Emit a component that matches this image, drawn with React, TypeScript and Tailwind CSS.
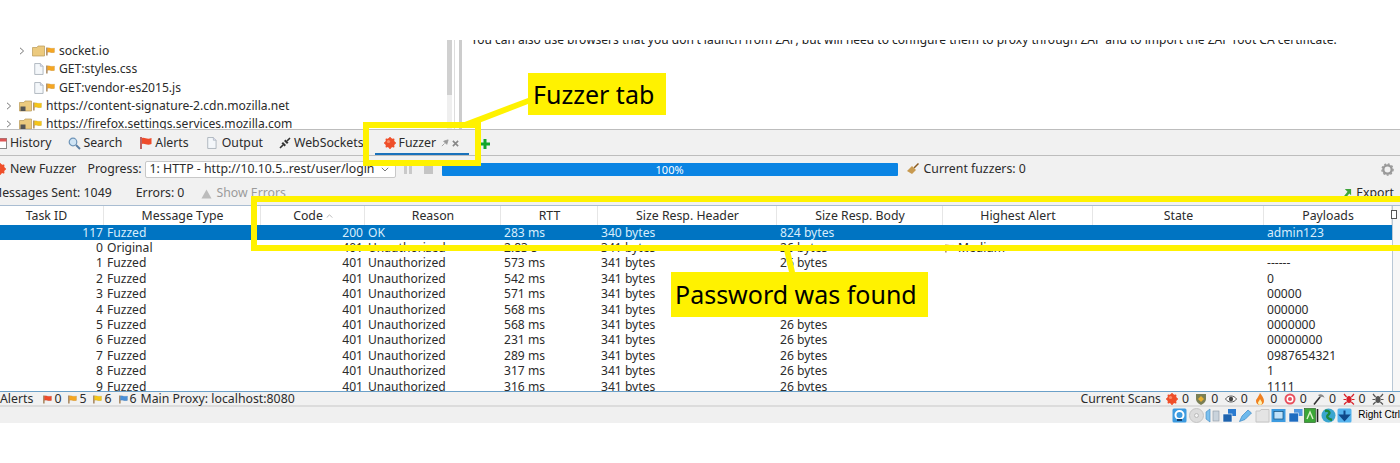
import React from "react";

const Flag = ({ c, className = "" }: { c: string; className?: string }) => (
  <svg viewBox="0 0 10 10" className={`w-[9px] h-[9px] shrink-0 ${className}`}>
    <path d="M1 0.5V9.5" stroke="#8a5a20" strokeWidth="1.2" />
    <path d="M1.5 1 C3.5 0 5 2.2 9.5 1 V6 C5.5 7 3.5 5 1.5 6Z" fill={c} stroke="#0003" strokeWidth=".4" />
  </svg>
);
const Folder = ({ lock }: { lock?: boolean }) => (
  <svg viewBox="0 0 13 12" className="w-[13px] h-[12px] shrink-0">
    <path d="M.5 2.5 H5 L6 1 H12.5 V11 H.5Z" fill="#ecca7e" stroke="#b99a58" strokeWidth=".7" />
    {lock && <rect x="1.5" y="6.5" width="5" height="4.5" fill="#555" />}
  </svg>
);
const FileIc = () => (
  <svg viewBox="0 0 11 13" className="w-[10px] h-[12px] shrink-0">
    <path d="M.8.5H7L10 3.5V12.5H.8Z" fill="#f4f7fa" stroke="#9aa4ae" strokeWidth=".8" />
    <path d="M7 .5V3.5H10" fill="#dde" stroke="#9aa4ae" strokeWidth=".6" />
  </svg>
);
const Chevron = () => (
  <svg viewBox="0 0 6 8" className="w-[6px] h-[8px] shrink-0">
    <path d="M1 .8 4.6 4 1 7.2" fill="none" stroke="#777" strokeWidth="1" />
  </svg>
);
const Burst = ({ size = 12 }: { size?: number }) => (
  <svg viewBox="0 0 12 12" style={{ width: size, height: size }} className="shrink-0">
    <circle cx="6" cy="6" r="5" fill="#ef4f2a" />
    <path d="M6 0V12M0 6H12M1.8 1.8 10.2 10.2M10.2 1.8 1.8 10.2" stroke="#ef4f2a" strokeWidth="1.5" />
    <circle cx="4.5" cy="4.5" r="1.6" fill="#f98a66" />
  </svg>
);
const Bug = ({ c }: { c: string }) => (
  <svg viewBox="0 0 12 12" className="w-[12px] h-[12px] shrink-0">
    <ellipse cx="6" cy="6.5" rx="2.6" ry="3.5" fill={c} />
    <path d="M1 1 3.6 4M11 1 8.4 4M.5 6.5H3M11.5 6.5H9M1 11.5 3.6 9M11 11.5 8.4 9" stroke={c} strokeWidth="1.2" />
  </svg>
);

const TopTree = () => {
  const Row = ({ pl, chev, folder, lock, file, flag, t }: any) => (
    <div className={`h-[18.3px] flex items-center ${pl}`}>
      <div className="w-[13px] shrink-0">{chev && <Chevron />}</div>
      {folder && <Folder lock={lock} />}
      {file && <div className="w-[13px] flex justify-center shrink-0"><FileIc /></div>}
      <Flag c={flag} className="ml-[1px] mr-[4px]" />
      <span>{t}</span>
    </div>
  );
  return (
    <div className="w-[446px] shrink-0 pt-[2px] overflow-hidden text-[12.1px]">
      <Row pl="pl-[19px]" chev folder flag="#f5a623" t="socket.io" />
      <Row pl="pl-[19px]" file flag="#f5a623" t="GET:styles.css" />
      <Row pl="pl-[19px]" file flag="#f5a623" t="GET:vendor-es2015.js" />
      <Row pl="pl-[6px]" chev folder lock flag="#f5c518" t="https://content-signature-2.cdn.mozilla.net" />
      <Row pl="pl-[6px]" chev folder lock flag="#f5c518" t="https://firefox.settings.services.mozilla.com" />
    </div>
  );
};

const tabs = [
  { t: "Search", ml: "ml-[17px]", ic: <svg viewBox="0 0 13 13" className="w-[13px] h-[13px] mr-[2px]"><circle cx="5" cy="5" r="3.8" fill="#cfe4f5" stroke="#6d94b8" strokeWidth="1.2" /><path d="M8 8 12 12" stroke="#5b7fa5" strokeWidth="2" /></svg> },
  { t: "Alerts", ml: "ml-[18px]", ic: <svg viewBox="0 0 12 12" className="w-[12px] h-[12px] mr-[3px]"><path d="M1 0V12" stroke="#a33" strokeWidth="1.5" /><path d="M2 1C5 0 7 3 11.5 1V7C7 9 5 6 2 7Z" fill="#ef4b2a" /></svg> },
  { t: "Output", ml: "ml-[18px]", ic: <span className="mr-[5px] flex"><FileIc /></span> },
  { t: "WebSockets", ml: "ml-[16px]", ic: <svg viewBox="0 0 12 12" className="w-[12px] h-[12px] mr-[3px]"><path d="M1 11 4 8M11 1 8 4" stroke="#333" strokeWidth="1.6" /><path d="M2.5 6.5 5.5 9.5 7 8 4 5ZM5 4 8 7 9.5 5.5 6.5 2.5Z" fill="#333" /></svg> },
];

const cols = ["Task ID", "Message Type", "Code", "Reason", "RTT", "Size Resp. Header", "Size Resp. Body", "Highest Alert", "State", "Payloads"];
const gridCols = "grid-cols-[104px_157px_104px_136px_97px_179px_166px_150px_171px_128px]";

const rows = [
  ["117", "Fuzzed", "200", "OK", "283 ms", "340 bytes", "824 bytes", "", "admin123"],
  ["0", "Original", "401", "Unauthorized", "2.83 s", "341 bytes", "26 bytes", "Medium", ""],
  ["1", "Fuzzed", "401", "Unauthorized", "573 ms", "341 bytes", "26 bytes", "", "------"],
  ["2", "Fuzzed", "401", "Unauthorized", "542 ms", "341 bytes", "26 bytes", "", "0"],
  ["3", "Fuzzed", "401", "Unauthorized", "571 ms", "341 bytes", "26 bytes", "", "00000"],
  ["4", "Fuzzed", "401", "Unauthorized", "568 ms", "341 bytes", "26 bytes", "", "000000"],
  ["5", "Fuzzed", "401", "Unauthorized", "568 ms", "341 bytes", "26 bytes", "", "0000000"],
  ["6", "Fuzzed", "401", "Unauthorized", "231 ms", "341 bytes", "26 bytes", "", "00000000"],
  ["7", "Fuzzed", "401", "Unauthorized", "289 ms", "341 bytes", "26 bytes", "", "0987654321"],
  ["8", "Fuzzed", "401", "Unauthorized", "317 ms", "341 bytes", "26 bytes", "", "1"],
  ["9", "Fuzzed", "401", "Unauthorized", "316 ms", "341 bytes", "26 bytes", "", "1111"],
];

const scanIcons = [
  <Burst />,
  <svg viewBox="0 0 12 12" className="w-[12px] h-[12px]"><path d="M1 1H11V6C11 9 8 11 6 12 4 11 1 9 1 6Z" fill="#7a7f55" /><path d="M6 3 9 6 6 9 3 6Z" fill="#e8b030" /></svg>,
  <svg viewBox="0 0 12 12" className="w-[12px] h-[12px]"><path d="M.5 6C3 2 9 2 11.5 6 9 10 3 10 .5 6Z" fill="#fff" stroke="#555" /><circle cx="6" cy="6" r="2.2" fill="#444" /></svg>,
  <svg viewBox="0 0 12 12" className="w-[12px] h-[12px]"><path d="M6 0C8 3 10 5 10 8 10 10.500 8 12 6 12 4 12 2 10.500 2 8 2 6 4 5 6 0Z" fill="#f08020" /><path d="M6 6C7 8 8 8.500 8 10 8 11 7 12 6 12 5 12 4 11 4 10 4 8.500 5.500 8 6 6Z" fill="#fff2b0" /></svg>,
  <svg viewBox="0 0 12 12" className="w-[12px] h-[12px]"><circle cx="6" cy="6" r="5.500" fill="#e8505e" /><circle cx="6" cy="6" r="3.500" fill="#fff" /><circle cx="6" cy="6" r="2" fill="#e8505e" /></svg>,
  <svg viewBox="0 0 12 12" className="w-[12px] h-[12px]"><path d="M1 11.500 7 4" stroke="#333" strokeWidth="1.600" /><path d="M5 2C8 0 11 2 11.500 5 10 3.500 8 3.500 7.500 4.500Z" fill="#888" /></svg>,
  <Bug c="#d8202a" />,
  <Bug c="#555" />,
];

const V = ({ children }: { children: React.ReactNode }) => (
  <svg viewBox="0 0 15 15" className="w-[15px] h-[15px] shrink-0">{children}</svg>
);
const vbox = [
  <V><rect x=".5" y=".5" width="14" height="14" rx="1.500" fill="#3d9be0" /><circle cx="7.500" cy="7" r="4" fill="none" stroke="#fff" strokeWidth="2" /><path d="M5 12h5" stroke="#12406e" strokeWidth="2" /></V>,
  <V><circle cx="7.500" cy="7.500" r="7" fill="#dcdcdc" stroke="#c4c4c4" /><circle cx="7.500" cy="7.500" r="2" fill="#f3f3f3" stroke="#bbb" /></V>,
  <V><path d="M1 4 5 1V14L1 11Z" fill="#7cc0ee" stroke="#3d87c0" strokeWidth=".6" /><rect x="8" y="3" width="6" height="10" fill="#c9d3dc" stroke="#8c98a3" strokeWidth=".6" /></V>,
  <V><rect x="6" y="1" width="8" height="7" fill="#2b7bd0" /><rect x="1" y="6" width="9" height="8" fill="#1f63ad" stroke="#fff" strokeWidth=".6" /></V>,
  <V><path d="M1.500 13.500 4 8 10 2 13.500 5 7 11.500Z" fill="#6db9ec" stroke="#3b88c4" strokeWidth=".7" /></V>,
  <V><path d="M1 3H5L6 1.500H14V14H1Z" fill="#e4e4e4" stroke="#c6c6c6" /></V>,
  <V><rect x=".5" y="1" width="14" height="13" fill="#3d9be0" /><rect x="3" y="3.500" width="9" height="7.500" fill="#bfe2fa" stroke="#12507e" strokeWidth=".7" /></V>,
  <V><rect x="6" y="1" width="8.500" height="7" fill="#4f97e0" /><rect x="1" y="5" width="9.500" height="9" fill="#1e6cc0" stroke="#fff" strokeWidth=".6" /></V>,
  <V><rect x=".5" y=".5" width="11" height="14" fill="#3aa636" stroke="#1e5a1c" strokeWidth=".6" /><path d="M3 11 6 4 9 11" fill="none" stroke="#d9f2c8" strokeWidth="1.400" /><path d="M13.500 1V14" stroke="#222" strokeWidth="1.600" /></V>,
  <V><circle cx="7.500" cy="7.500" r="7" fill="#3aa5cf" /><path d="M4 3C8 2 10 5 7 7 5 8.500 7 11 11 12" fill="none" stroke="#1d8a3d" strokeWidth="2.400" /></V>,
  <V><rect x=".5" y=".5" width="14" height="14" rx="1.500" fill="#55b3ee" /><path d="M7.500 2.500V8M3.500 7.500H11.500L7.500 12Z" stroke="#10498a" strokeWidth="2" fill="#10498a" /></V>,
];

export default function App() {
  return (
    <div className="relative w-[1400px] h-[463px] bg-white overflow-hidden text-[#2b2b2b] text-[12.3px] leading-none font-['Noto_Sans',sans-serif]">
      <div className="h-[40px]" />
      {/* upper panes */}
      <div className="h-[89px] flex overflow-hidden bg-white">
        <TopTree />
        <div className="w-[5px] h-full bg-[#efefef] ml-[1px] mr-[2px]"><div className="w-full h-[55px] bg-[#d0d0d0]" /></div>
        <div className="w-[1px] h-full bg-[#dddddd] mr-[4px]" />
        <div className="w-[3px] h-full bg-[#cccccc] mr-[9px]" />
        <div className="-mt-[6px] whitespace-nowrap text-[#222] text-[12px]">You can also use browsers that you don't launch from ZAP, but will need to configure them to proxy through ZAP and to import the ZAP root CA certificate.</div>
      </div>
      {/* tab strip */}
      <div className="h-[27px] bg-[#f1f1f1] border-y border-[#bdbdbd] flex items-center relative pt-[2px]">
        <div className="flex items-center -ml-[5px]">
          <svg viewBox="0 0 12 12" className="w-[12px] h-[12px] mr-[3px]"><rect x=".5" y="1.500" width="11" height="10" fill="#fff" stroke="#888" /><rect x=".5" y="1.500" width="11" height="3" fill="#d55" /></svg>
          <span>History</span>
        </div>
        {tabs.map((t) => (
          <div key={t.t} className={`flex items-center ${t.ml}`}>{t.ic}<span>{t.t}</span></div>
        ))}
        <div className="flex items-center ml-[20px]">
          <Burst />
          <span className="ml-[3px]">Fuzzer</span>
          <svg viewBox="0 0 9 9" className="w-[8px] h-[8px] ml-[5px]"><path d="M1 8 4 5M3 2.500 6.500 6 8 1Z" stroke="#999" fill="#999" /></svg>
          <svg viewBox="0 0 8 8" className="w-[7px] h-[7px] ml-[3px]"><path d="M1 1 7 7M7 1 1 7" stroke="#888" strokeWidth="1.800" /></svg>
        </div>
        <svg viewBox="0 0 10 10" className="w-[10px] h-[10px] ml-[21px]"><path d="M5 0V10M0 5H10" stroke="#12a52c" strokeWidth="3" /></svg>
        <div className="absolute left-[375px] w-[94px] bottom-0 h-[2px] bg-[#1a72bb]" />
      </div>
      {/* toolbar */}
      <div className="h-[23px] bg-[#f1f1f1] flex items-center pt-[3px]">
        <div className="-ml-[6px] mr-[4px] flex"><Burst /></div>
        <span>New Fuzzer</span>
        <span className="ml-[11px]">Progress:</span>
        <div className="ml-[3px] w-[251px] shrink-0 h-[17px] bg-white border border-[#c8c8c8] rounded-[2px] flex items-center justify-between pl-[4px] pr-[6px] whitespace-nowrap">
          <span>1: HTTP - http://10.10.5..rest/user/login</span>
          <svg viewBox="0 0 8 5" className="w-[8px] h-[5px]"><path d="M.8.800 4 4 7.200.800" stroke="#777" fill="none" /></svg>
        </div>
        <div className="ml-[8px] flex gap-[2px]"><div className="w-[3px] h-[9px] bg-[#c9c9c9]" /><div className="w-[3px] h-[9px] bg-[#c9c9c9]" /></div>
        <div className="ml-[12px] w-[9px] h-[9px] bg-[#c4c4c4]" />
        <div className="ml-[9px] w-[456px] h-[13px] bg-[#0a84e3] rounded-[1px] text-white text-[11px] flex items-center justify-center">100%</div>
        <svg viewBox="0 0 12 12" className="ml-[9px] w-[12px] h-[12px]"><path d="M11.500.500 7 5" stroke="#8a5a20" strokeWidth="1.500" /><path d="M5 3 9 7 5 11 0 8Z" fill="#c89a50" /></svg>
        <span className="ml-[5px]">Current fuzzers: 0</span>
        <svg viewBox="0 0 14 14" className="ml-auto mr-[6px] w-[13px] h-[13px]"><circle cx="7" cy="7" r="4.500" fill="none" stroke="#999" strokeWidth="2.500" /><circle cx="7" cy="7" r="6" fill="none" stroke="#999" strokeWidth="1.500" strokeDasharray="2 2" /></svg>
      </div>
      {/* stats */}
      <div className="h-[26px] bg-[#f1f1f1] flex items-center pt-[3px]">
        <span className="-ml-[9px]">Messages Sent: 1049</span>
        <span className="ml-[24px]">Errors: 0</span>
        <svg viewBox="0 0 12 11" className="ml-[17px] mr-[4px] w-[11px] h-[10px]"><path d="M6 .500 11.500 10.500H.5Z" fill="#bcbcbc" /></svg>
        <span className="text-[#9b9b9b]">Show Errors</span>
        <svg viewBox="0 0 10 12" className="ml-auto mr-[4px] w-[9px] h-[11px]"><path d="M2 1H9V8L7 6 3 11 1 9 5 4Z" fill="#3ea53a" /></svg>
        <span className="mr-[6px]">Export</span>
      </div>
      {/* table */}
      <div className="h-[187px] bg-white border-y border-t-[#a9bdd2] border-b-[#6ba0c8] overflow-hidden flex">
        <div className="w-[1392px] shrink-0 overflow-hidden">
          <div className={`grid ${gridCols} h-[19px] bg-white`}>
            {cols.map((n, i) => (
              <div key={n} className={`flex items-center justify-center border-r border-[#e6e6e6] pt-[1px] ${i === 0 ? "pr-[10px]" : "pl-[1px]"}`}>
                {n}
                {n === "Code" && <svg viewBox="0 0 8 5" className="w-[7px] h-[4px] ml-[3px]"><path d="M.5 4.500 4 1 7.500 4.500" fill="none" stroke="#aaa" /></svg>}
              </div>
            ))}
          </div>
          {rows.map((r, i) => (
            <div key={i} className={`grid ${gridCols} h-[15.4px] items-center text-[12.1px] ${i === 0 ? "bg-[#0074c2] text-[#d8eefd]" : ""}`}>
              <div className="text-right pr-[1px]">{r[0]}</div>
              <div className="pl-[3px]">{r[1]}</div>
              <div className="text-right pr-[2px]">{r[2]}</div>
              <div className="pl-[3px]">{r[3]}</div>
              <div className="pl-[3px]">{r[4]}</div>
              <div className="pl-[3px]">{r[5]}</div>
              <div className="pl-[3px]">{r[6]}</div>
              <div className="pl-[2px] flex items-center gap-[4px]">{r[7] && <><Flag c="#f5a623" />{r[7]}</>}</div>
              <div />
              <div className="pl-[3px]">{r[8]}</div>
            </div>
          ))}
        </div>
        <div className="relative flex-1 border-l border-[#b9c8d6] bg-[#f7f7f7]">
          <div className="absolute -left-[2px] top-[4px] w-[6px] h-[9px] border border-[#555] bg-white" />
        </div>
      </div>
      {/* status */}
      <div className="h-[13px] bg-[#f1f1f1] flex items-center pt-[1px]">
        <span>Alerts</span>
        <Flag c="#ef4b2a" className="ml-[10px] mr-[2px]" /><span>0</span>
        <Flag c="#f5a623" className="ml-[7px] mr-[2px]" /><span>5</span>
        <Flag c="#f5c518" className="ml-[7px] mr-[2px]" /><span>6</span>
        <Flag c="#4a90d9" className="ml-[7px] mr-[2px]" /><span>6</span>
        <span className="ml-[4px]">Main Proxy: localhost:8080</span>
        <span className="ml-auto mr-[5px]">Current Scans</span>
        {scanIcons.map((ic, i) => (
          <div key={i} className={`flex items-center ${i ? "ml-[6.4px]" : ""}`}>{ic}<span className="ml-[4px]">0</span></div>
        ))}
        <div className="w-[5px]" />
      </div>
      {/* VM bar */}
      <div className="h-[18px] bg-[#f0f0f0] border-t-2 border-[#dcdcdc] flex items-center justify-end">
        <div className="flex gap-[1.500px] mr-[6px]">{vbox.map((ic, i) => <React.Fragment key={i}>{ic}</React.Fragment>)}</div>
        <span className="text-[10px] font-['Liberation_Sans',sans-serif] text-black whitespace-nowrap">Right Ctrl</span>
      </div>

      {/* annotations */}
      <svg className="absolute left-0 top-0 w-[1400px] h-[463px] pointer-events-none" viewBox="0 0 1400 463">
        <path d="M528 98 462 123 466 128 528 104Z" fill="#fff200" />
        <path d="M784 250H790L795 272H789Z" fill="#fff200" />
      </svg>
      <div className="absolute left-[363px] top-[122px] w-[118px] h-[44px] border-[6px] border-[#fff200]" />
      <div className="absolute left-[251px] top-[196px] w-[1160px] h-[55px] border-[6px] border-[#fff200]" />
      <div className="absolute left-[528px] top-[73px] w-[138px] h-[42px] bg-[#fff200] flex items-center pl-[5px] text-[25px] text-black font-['Noto_Sans',sans-serif] whitespace-nowrap">Fuzzer tab</div>
      <div className="absolute left-[671px] top-[272px] w-[257px] h-[45px] bg-[#fff200] flex items-center pl-[4px] text-[25px] text-black font-['Noto_Sans',sans-serif] whitespace-nowrap">Password was found</div>
    </div>
  );
}
